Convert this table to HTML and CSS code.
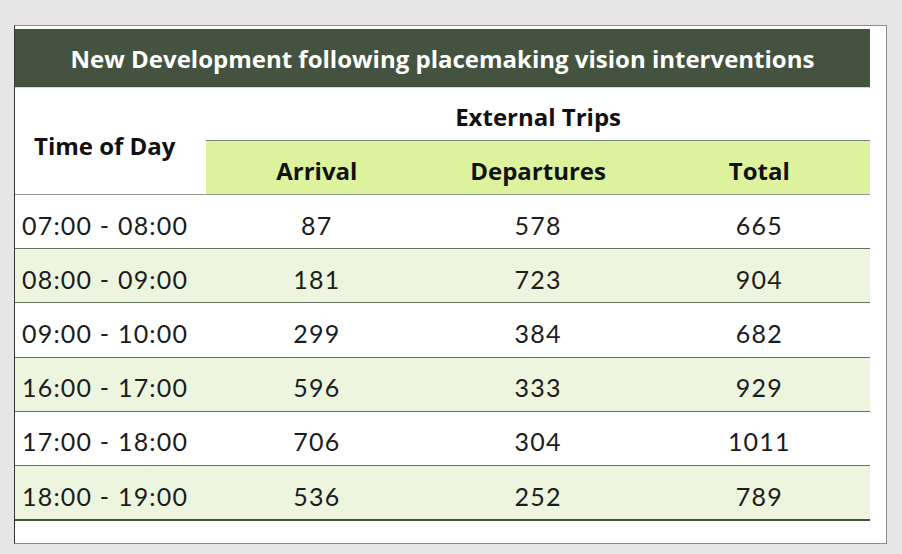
FILE: index.html
```html
<!DOCTYPE html>
<html>
<head>
<meta charset="utf-8">
<link rel="stylesheet" href="styles.css">
</head>
<body>
<div class="card">
  <table class="trips">
    <colgroup>
      <col class="c-time"><col class="c-num"><col class="c-num"><col class="c-num">
    </colgroup>
    <thead>
      <tr class="title-row"><th colspan="4">New Development following placemaking vision interventions</th></tr>
      <tr class="group-row">
        <th rowspan="2" class="time-head">Time of Day</th>
        <th colspan="3" class="group">External Trips</th>
      </tr>
      <tr class="sub-row">
        <th>Arrival</th><th>Departures</th><th>Total</th>
      </tr>
    </thead>
    <tbody>
      <tr><td class="time">07:00 - 08:00</td><td>87</td><td>578</td><td>665</td></tr>
      <tr class="alt"><td class="time">08:00 - 09:00</td><td>181</td><td>723</td><td>904</td></tr>
      <tr><td class="time">09:00 - 10:00</td><td>299</td><td>384</td><td>682</td></tr>
      <tr class="alt"><td class="time">16:00 - 17:00</td><td>596</td><td>333</td><td>929</td></tr>
      <tr><td class="time">17:00 - 18:00</td><td>706</td><td>304</td><td>1011</td></tr>
      <tr class="alt last"><td class="time">18:00 - 19:00</td><td>536</td><td>252</td><td>789</td></tr>
    </tbody>
  </table>
</div>
</body>
</html>
```
FILE: styles.css
```css
html, body {
  margin: 0;
  padding: 0;
  background: #e6e6e6;
}
body {
  padding: 25px 0 0 14px;
  font-family: "Lato", "Open Sans", sans-serif;
}
.card {
  box-sizing: border-box;
  width: 873px;
  height: 519px;
  background: #fff;
  border: 1px solid #8a8a8a;
  border-left-color: #333;
  padding: 3px 16px 0 0;
}
.trips {
  width: 855px;
  border-collapse: collapse;
  table-layout: fixed;
}
.c-time { width: 191px; }
.c-num { width: 221px; }
.title-row th {
  background: #43533f;
  color: #fff;
  height: 58px;
  padding: 0;
  font-family: "Open Sans", sans-serif;
  font-weight: 700;
  font-size: 24px;
  text-align: center;
  border-bottom: 1px solid #d8d8d8;
}
.group-row th {
  height: 48px;
  padding: 0;
  font-family: "Open Sans", sans-serif;
  font-weight: 700;
  font-size: 24px;
  color: #111;
}
.group-row .group {
  text-align: center;
  border-bottom: 1px solid #7e857b;
  vertical-align: middle;
  padding-top: 4px;
}
.time-head {
  text-align: left;
  padding-left: 19px !important;
  padding-top: 8px !important;
  border-bottom: 1px solid #8f968c;
}
.sub-row th {
  height: 47px;
  padding: 6px 0 0;
  background: #dcf29c;
  font-family: "Open Sans", sans-serif;
  font-weight: 700;
  font-size: 24px;
  color: #111;
  text-align: center;
  border-bottom: 1px solid #8f968c;
}
tbody td {
  height: 47.2px;
  padding: 6px 0 0;
  font-family: "Lato", sans-serif;
  font-size: 25px;
  letter-spacing: 1.2px;
  color: #1c1c1c;
  text-align: center;
  border-bottom: 1px solid #66735f;
}
tbody td.time {
  text-align: left;
  padding-left: 7px;
}
tbody tr.alt td {
  background: #eef5df;
}
tbody tr.last td {
  border-bottom: 2px solid #3f5538;
}
```
